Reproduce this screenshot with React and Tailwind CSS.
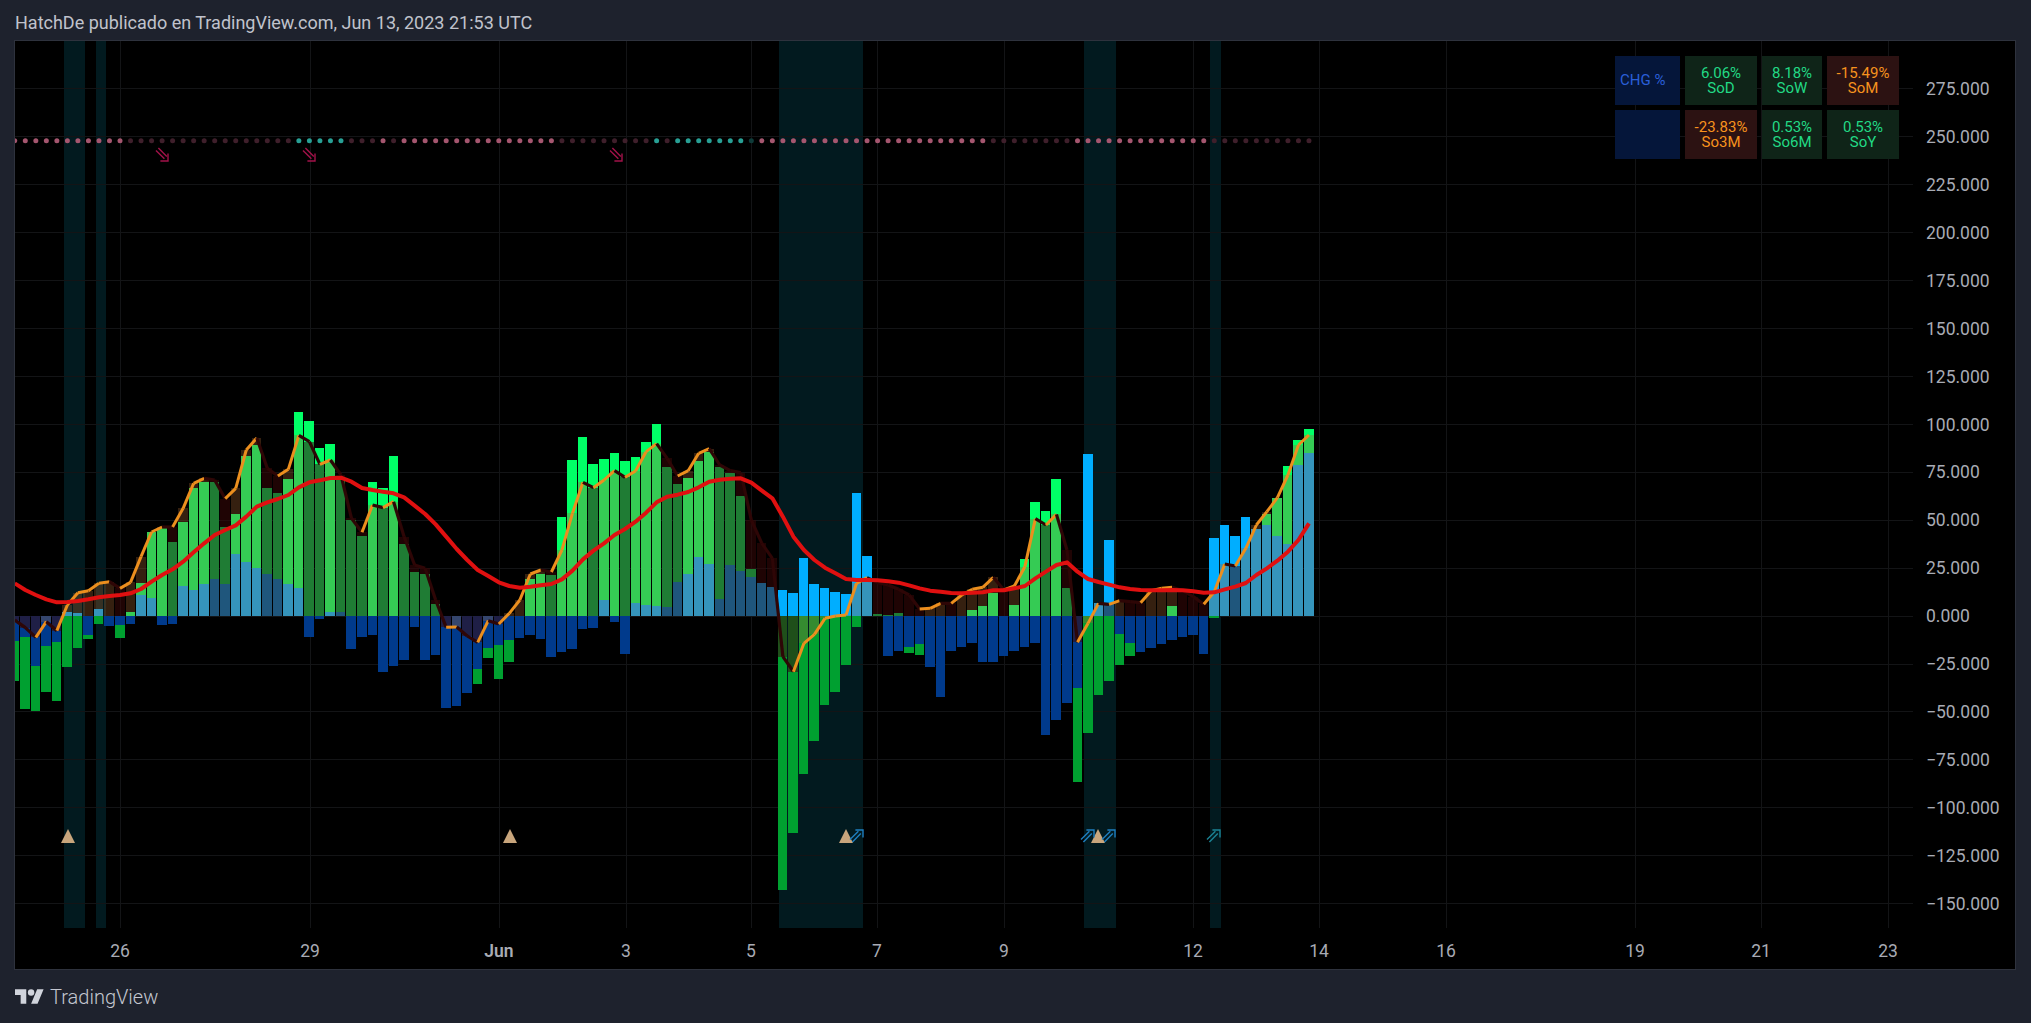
import React from 'react'

// Sampled series, one value per 4h bar from k = -10. Values are page y in 1/3 px above y = 400
const greenBars = [
  842, 927, 932, 875, 902, 800, 743, 716, 672, 647,
  713, 636, 549, 396, 384, 426, 366, 263, 246, 246,
  381, 342, 168, 135, 264, 279, 237, 36, 63, 144,
  132, 240, 360, 408, 246, 264, 168, 432, 516, 522,
  612, 647, 647, 647, 851, 773, 836, 785, 647, 537,
  522, 525, 351, 180, 111, 192, 177, 159, 183, 171,
  126, 72, 201, 252, 234, 183, 156, 201, 219, 288,
  507, 647, 647, 1469, 1298, 1122, 1023, 915, 876, 795,
  681, 647, 643, 644, 640, 759, 765, 647, 647, 647,
  647, 630, 618, 579, 647, 615, 477, 306, 333, 237,
  564, 1145, 998, 885, 842, 794, 767, 647, 647, 647,
  618, 647, 647, 647, 653, 647, 647, 647, 647, 342,
  294, 198, 120, 87,
]

const blueBars = [
  722, 710, 797, 737, 725, 637, 640, 705, 627, 677,
  675, 671, 585, 594, 674, 671, 558, 570, 552, 537,
  552, 462, 486, 504, 522, 537, 552, 564, 710, 656,
  636, 636, 746, 710, 704, 815, 797, 779, 680, 779,
  764, 923, 917, 878, 806, 743, 735, 720, 714, 705,
  717, 771, 756, 747, 687, 684, 600, 666, 762, 609,
  615, 618, 621, 546, 522, 471, 492, 597, 495, 513,
  531, 549, 561, 570, 579, 474, 552, 564, 576, 582,
  279, 468, 647, 767, 753, 740, 732, 800, 890, 753,
  740, 728, 785, 785, 767, 752, 740, 728, 1004, 959,
  908, 864, 162, 609, 420, 702, 729, 755, 743, 731,
  719, 710, 704, 761, 414, 375, 408, 351, 387, 375,
  408, 432, 195, 159,
]

const oscillator = [
  660, 683, 712, 665, 692, 615, 578, 572, 550, 545,
  565, 547, 470, 396, 381, 381, 325, 250, 235, 240,
  296, 265, 150, 114, 205, 228, 208, 106, 125, 193,
  180, 225, 355, 397, 315, 323, 305, 410, 495, 505,
  600, 682, 681, 708, 727, 662, 672, 640, 600, 522,
  510, 516, 450, 340, 247, 263, 240, 212, 232, 213,
  155, 131, 175, 228, 212, 160, 146, 195, 212, 218,
  360, 430, 475, 770, 815, 730, 703, 655, 648, 645,
  550, 533, 548, 555, 568, 585, 627, 625, 610, 610,
  585, 568, 562, 532, 570, 558, 500, 356, 375, 343,
  450, 727, 670, 610, 613, 602, 605, 608, 572, 565,
  562, 572, 590, 613, 575, 492, 498, 445, 375, 335,
  293, 225, 135, 105,
]

const movingAverage = [
  550, 570, 585, 598, 607, 606, 603, 598, 592, 588,
  585, 580, 567, 545, 525, 508, 485, 457, 430, 405,
  390, 376, 350, 320, 307, 297, 285, 262, 247, 241,
  234, 233, 245, 264, 270, 275, 280, 292, 317, 342,
  373, 410, 447, 480, 510, 528, 547, 558, 563, 560,
  556, 552, 538, 512, 478, 452, 430, 405, 387, 365,
  338, 307, 290, 284, 276, 262, 245, 239, 236, 235,
  248, 272, 295, 350, 410, 450, 480, 503, 520, 537,
  540, 540, 541, 544, 548, 556, 565, 572, 575, 579,
  580, 578, 577, 571, 571, 565, 558, 535, 515, 495,
  487, 515, 537, 546, 554, 562, 567, 570, 571, 571,
  570, 571, 574, 578, 577, 568, 560, 549, 525, 505,
  482, 455, 420, 370,
]

const FIRST_BAR = -10
const ZERO = 647

const prices = [
  '275.000', '250.000', '225.000', '200.000', '175.000', '150.000', '125.000', '100.000', '75.000',
  '50.000', '25.000', '0.000', '−25.000', '−50.000', '−75.000', '−100.000', '−125.000', '−150.000',
]

const timeTicks = [
  { x: 120, label: '26' },
  { x: 310, label: '29' },
  { x: 499, label: 'Jun', bold: true },
  { x: 626, label: '3' },
  { x: 751, label: '5' },
  { x: 877, label: '7' },
  { x: 1004, label: '9' },
  { x: 1193, label: '12' },
  { x: 1319, label: '14' },
  { x: 1446, label: '16' },
  { x: 1635, label: '19' },
  { x: 1761, label: '21' },
  { x: 1888, label: '23' },
]

const bands = [[64, 85], [96, 106], [779, 863], [1084, 1116], [1210, 1221]]
const triangles = [68, 510, 846, 1098]
const sellArrows = [162, 309, 616]
const buyArrows = [
  { x: 857, color: '#1f7fc0' },
  { x: 1088, color: '#1f7fc0' },
  { x: 1109, color: '#1f7fc0' },
  { x: 1214, color: '#1b8496' },
]

const changeCells = [
  { tone: 'blue', label: 'CHG %' },
  { tone: 'green', value: '6.06%', label: 'SoD' },
  { tone: 'green', value: '8.18%', label: 'SoW' },
  { tone: 'red', value: '-15.49%', label: 'SoM' },
  { tone: 'blue' },
  { tone: 'red', value: '-23.83%', label: 'So3M' },
  { tone: 'green', value: '0.53%', label: 'So6M' },
  { tone: 'green', value: '0.53%', label: 'SoY' },
]

const toneClasses = {
  blue: 'bg-[#05163a] text-[#2a5fd8]',
  green: 'bg-[#0f2418] text-[#22d985]',
  red: 'bg-[#2c1212] text-[#f7931e]',
}

const pageY = (v) => 400 + v / 3
const barCenter = (k) => 120 + 10.522 * k
const barLeft = (k) => Math.round(115 + 10.522 * k)

function dotColor(k) {
  if (k === 60) return '#0f3b39'
  if ((k >= 17 && k <= 21) || k === 51 || (k >= 53 && k <= 59)) return '#28a095'
  const bright = k <= 0 || k === 25 || (k >= 27 && k <= 41) || (k >= 61 && k <= 82) || (k >= 91 && k <= 103)
  return bright ? '#a5566f' : '#3f1f2b'
}

function Bar({ k, value, fill, opacity }) {
  if (value === ZERO) return null
  const top = Math.round(pageY(Math.min(value, ZERO)))
  const bottom = Math.round(pageY(Math.max(value, ZERO)))
  const left = barLeft(k)
  return (
    <rect
      x={left}
      y={top}
      width={barLeft(k + 1) - left - 1}
      height={Math.max(bottom - top, 1)}
      fill={fill}
      fillOpacity={opacity}
    />
  )
}

function DoubleArrow({ x, y, color, rotate = 0 }) {
  return (
    <g transform={`translate(${x} ${y}) rotate(${rotate})`} fill="none" stroke={color} strokeWidth="1.4">
      <path d="M-7 3.6 L1.4 -4.8" />
      <path d="M-4.6 6 L3.8 -2.4" />
      <path d="M-1.6 -6 L6 -6 L6 1.6" />
    </g>
  )
}

function ChartDrawing() {
  const bars = greenBars.map((_, i) => i + FIRST_BAR)

  return (
    <svg viewBox="15 41 1898 887" className="block h-[887px] w-[1898px] flex-none">
      <rect x="15" y="41" width="1898" height="887" fill="#000000" />

      {bands.map(([from, to]) => (
        <rect key={from} x={from} y="41" width={to - from} height="887" fill="#021a1f" />
      ))}

      {/* Grid */}
      <g stroke="#131416" strokeWidth="1" shapeRendering="crispEdges">
        {prices.map((_, i) => {
          const y = Math.round(88 + i * 47.96) + 0.5
          return <line key={i} x1="15" x2="1913" y1={y} y2={y} />
        })}
        {timeTicks.map((t) => (
          <line key={t.x} x1={t.x + 0.5} x2={t.x + 0.5} y1="41" y2="928" />
        ))}
      </g>

      {/* Dots row */}
      {bars.map((k) => (
        <circle key={k} cx={barCenter(k)} cy="140.7" r="2.5" fill={dotColor(k)} />
      ))}

      {sellArrows.map((x) => (
        <DoubleArrow key={x} x={x} y={155} color="#a3124a" rotate={90} />
      ))}

      {/* Histograms and oscillator columns */}
      <g shapeRendering="crispEdges">
        {bars.map((k, i) => (
          <Bar key={k} k={k} value={greenBars[i]} fill={greenBars[i] < ZERO ? '#00ff66' : '#00a030'} />
        ))}
        {bars.map((k, i) => (
          <Bar key={k} k={k} value={blueBars[i]} fill={blueBars[i] < ZERO ? '#00aeff' : '#003a8c'} />
        ))}
        {bars.map((k, i) => {
          const rising = i > 0 && oscillator[i] < oscillator[i - 1]
          return (
            <Bar
              key={k}
              k={k}
              value={oscillator[i]}
              fill={rising ? '#a06030' : '#3a0808'}
              opacity={rising ? 0.33 : 0.53}
            />
          )
        })}
      </g>

      {/* Oscillator line, orange while rising and dark red while falling */}
      {bars.slice(1).map((k, i) => {
        const rising = oscillator[i + 1] < oscillator[i]
        return (
          <line
            key={k}
            x1={barCenter(k - 1)}
            y1={pageY(oscillator[i])}
            x2={barCenter(k)}
            y2={pageY(oscillator[i + 1])}
            stroke={rising ? '#ec8f1e' : '#2e0606'}
            strokeWidth={rising ? 3 : 3.2}
          />
        )
      })}

      <polyline
        fill="none"
        stroke="#e01010"
        strokeWidth="4"
        strokeLinejoin="round"
        points={movingAverage.map((v, i) => `${barCenter(i + FIRST_BAR)},${pageY(v)}`).join(' ')}
      />

      {triangles.map((x) => (
        <path key={x} d={`M${x} 829 L${x + 7} 843 L${x - 7} 843 Z`} fill="#c8a57c" />
      ))}

      {buyArrows.map((a) => (
        <DoubleArrow key={a.x} x={a.x} y={836} color={a.color} />
      ))}
    </svg>
  )
}

function ChangeTable() {
  return (
    <div className="absolute top-[15px] right-[116px] grid grid-cols-[65px_72px_60px_72px] auto-rows-[49px] gap-[5px] text-[15px] leading-[15px]">
      {changeCells.map((cell, i) => (
        <div
          key={i}
          className={`flex flex-col justify-center ${toneClasses[cell.tone]} ${cell.value ? 'items-center' : 'items-start pl-[5px]'}`}
        >
          {cell.value && <span>{cell.value}</span>}
          {cell.label && <span>{cell.label}</span>}
        </div>
      ))}
    </div>
  )
}

function TradingViewLogo() {
  return (
    <svg viewBox="0 4 36 18" className="h-[15px] w-[29px] flex-none" fill="#d1d4dc">
      <path d="M14 22H7V11H0V4h14v18zM28 22h-8l7.5-18h8L28 22z" />
      <circle cx="20" cy="8" r="4" />
    </svg>
  )
}

export default function App() {
  return (
    <div className="flex h-[1023px] w-[2031px] flex-col overflow-hidden bg-[#1e222d] font-['Roboto',sans-serif]">
      <div className="flex h-[40px] flex-none items-center px-[15px] pt-1 text-[18px] text-[#c0c3cc]">
        HatchDe publicado en TradingView.com, Jun 13, 2023 21:53 UTC
      </div>

      <div className="relative mx-[14px] flex h-[930px] w-[2002px] flex-none flex-col border border-[#2e323d] bg-black">
        <div className="flex h-[887px] flex-none">
          <ChartDrawing />
          <div className="flex-1 pt-[24px] pl-[13px] text-[17.5px] text-[#a8abb4]">
            {prices.map((price) => (
              <div key={price} className="flex h-[47.96px] items-center">
                {price}
              </div>
            ))}
          </div>
        </div>

        <div className="relative flex-1 text-[17.5px] text-[#a8abb4]">
          {timeTicks.map((tick) => (
            <span
              key={tick.x}
              className={`absolute top-[10px] -translate-x-1/2 ${tick.bold ? 'font-semibold' : ''}`}
              style={{ left: tick.x - 15 }}
            >
              {tick.label}
            </span>
          ))}
        </div>

        <ChangeTable />
      </div>

      <div className="flex flex-1 items-center gap-[6px] px-[15px] text-[20px] font-light text-[#c4c7d0]">
        <TradingViewLogo />
        <span>TradingView</span>
      </div>
    </div>
  )
}
